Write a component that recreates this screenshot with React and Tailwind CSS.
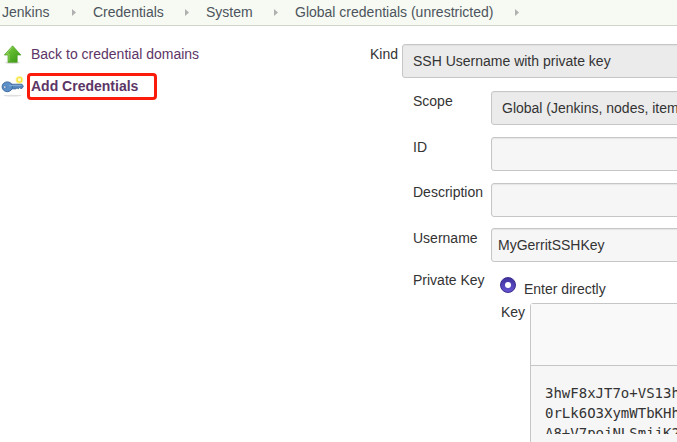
function Crumb({ label, className }) {
  return (
    <span className={`flex shrink-0 items-center justify-between ${className}`}>
      <span>{label}</span>
      <svg className="mt-px h-[7px] w-[4px]" viewBox="0 0 4 7">
        <path d="M0 0 L4 3.5 L0 7 Z" fill="#b0b0b0" />
      </svg>
    </span>
  );
}

function UpArrow() {
  return (
    <svg className="h-6 w-6 shrink-0" viewBox="0 0 24 24">
      <defs>
        <linearGradient id="leaf" x1="0" y1="0" x2="1" y2="1">
          <stop offset="0" stopColor="#8ad04a" />
          <stop offset="0.5" stopColor="#58b329" />
          <stop offset="1" stopColor="#3a9312" />
        </linearGradient>
      </defs>
      <ellipse cx="12.5" cy="20.6" rx="7.5" ry="1.2" fill="#d5d8d2" />
      <path d="M12.6 3.8 L20.9 13 H17.2 V20.3 H8 V13 H4.3 Z" fill="url(#leaf)" stroke="#4ba023" strokeWidth="0.7" strokeLinejoin="round" />
      <path d="M12.4 5 L6.3 12.1 H9 V19.3" fill="none" stroke="#a5dc70" strokeWidth="0.7" />
    </svg>
  );
}

function KeyIcon() {
  return (
    <svg className="h-6 w-6 shrink-0" viewBox="0 0 24 24">
      <ellipse cx="12.5" cy="21.6" rx="9.5" ry="0.9" fill="#dedede" />
      <circle cx="19.4" cy="5.8" r="3.9" fill="#fff36a" opacity="0.6" />
      <circle cx="19.4" cy="5.8" r="2.4" fill="#fffbd0" stroke="#f7e23c" strokeWidth="1.3" />
      <path d="M10.5 10.2 H22 L23.4 12.3 L22 14.4 H20.5 L19.5 13.6 L18.3 14.9 L17 13.9 L15.8 14.9 H10.5 Z" fill="#5685bb" stroke="#3e6ba0" strokeWidth="0.8" />
      <ellipse cx="7.3" cy="12.8" rx="5.2" ry="4.9" fill="#5c8fc8" stroke="#3e6ba0" strokeWidth="1" />
      <ellipse cx="4.8" cy="13.1" rx="1.2" ry="1.3" fill="#e9f0f6" stroke="#315f95" strokeWidth="0.6" />
      <path d="M9 11.6 H21.5" stroke="#8fb6df" strokeWidth="0.8" />
    </svg>
  );
}

function Field({ label, value, fieldClass, rowClass, labelClass = "leading-5" }) {
  return (
    <div className={`flex h-[34px] items-start ${rowClass}`}>
      <span className={`w-[78px] shrink-0 ${labelClass}`}>{label}</span>
      <div className={`flex h-[34px] w-[300px] shrink-0 items-center rounded-[3px] border border-[#c6c6c6] leading-5 whitespace-nowrap shadow-[inset_0_1px_1px_#e6e6e6] ${fieldClass}`}>
        {value}
      </div>
    </div>
  );
}

export default function App() {
  return (
    <div className="h-[442px] w-[677px] overflow-hidden bg-white font-['Liberation_Sans',Arial,sans-serif] text-[14px] text-[#333333]">
      <nav className="flex h-[26px] items-center border-b border-[#d0d3ca] bg-[#f6faf2] pb-[2px] pl-[2px] leading-5 whitespace-nowrap text-[#4d545d]">
        <Crumb label="Jenkins" className="mr-[17px] w-[74px]" />
        <Crumb label="Credentials" className="mr-[17px] w-[96px]" />
        <Crumb label="System" className="mr-[17px] w-[72px]" />
        <Crumb label="Global credentials (unrestricted)" className="w-[224px]" />
      </nav>
      <div className="flex">
        <aside className="flex w-[370px] shrink-0 flex-col text-[#5c3566]">
          <div className="mt-[16px] flex h-6 items-center">
            <UpArrow />
            <span className="ml-[7px] pt-px leading-[21px]">Back to credential domains</span>
          </div>
          <div className="mt-[6px] flex h-[28px] items-center">
            <KeyIcon />
            <div className="ml-[3px] flex h-[27px] w-[130px] items-center rounded-[4px] border-[3px] border-[#fb1b0b] pl-px leading-5 font-bold">
              Add Credentials
            </div>
          </div>
        </aside>
        <main className="w-[307px] shrink-0">
          <div className="mt-[18px] flex h-[34px]">
            <span className="w-[32px] shrink-0 leading-5">Kind</span>
            <div className="flex h-[34px] w-[300px] shrink-0 items-center rounded-[3px] border border-[#c6c6c6] bg-[#ebebeb] pl-[10px] leading-5 shadow-[inset_0_1px_1px_#e0e0e0]">
              SSH Username with private key
            </div>
          </div>
          <div className="pl-[43px]">
            <Field label="Scope" value="Global (Jenkins, nodes, item" rowClass="mt-[13px]" fieldClass="bg-[#ebebeb] pl-[10px]" />
            <Field label="ID" value="" rowClass="mt-[12px]" fieldClass="bg-[#f6f6f6]" />
            <Field label="Description" value="" rowClass="mt-[12px]" fieldClass="bg-[#f6f6f6]" labelClass="leading-[18px]" />
            <Field label="Username" value="MyGerritSSHKey" rowClass="mt-[11px]" fieldClass="bg-[#f6f6f6] pl-[6px]" />
            <div className="mt-[8px] flex h-[33px]">
              <span className="w-[87px] shrink-0 leading-5">Private Key</span>
              <span className="mt-[7px] flex h-4 w-4 shrink-0 items-center justify-center rounded-full border border-[#38298c] bg-linear-to-b from-[#41329f] to-[#6555d2]">
                <span className="h-[6px] w-[6px] rounded-full bg-white" />
              </span>
              <span className="mt-[9px] ml-[8px] leading-5">Enter directly</span>
            </div>
            <div className="flex pl-[88px]">
              <span className="w-[29px] shrink-0 leading-[18px]">Key</span>
              <div className="h-[160px] w-[300px] shrink-0 rounded-[3px] border border-[#c6c6c6] bg-[#f6f6f6]">
                <div className="h-[62px] border-b border-[#c6c6c6] bg-[#f9f9f9]" />
                <div className="mt-[17px] ml-[14px] h-[51px] overflow-hidden font-['DejaVu_Sans_Mono',monospace] text-[14px] leading-5 whitespace-nowrap">
                  <div>3hwF8xJT7o+VS13h</div>
                  <div>0rLk6O3XymWTbKHh</div>
                  <div>A8+V7pojNLSmijK2</div>
                </div>
              </div>
            </div>
          </div>
        </main>
      </div>
    </div>
  );
}
